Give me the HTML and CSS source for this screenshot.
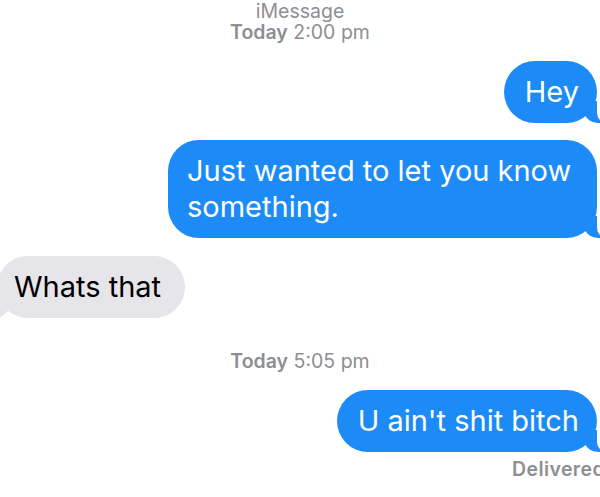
FILE: index.html
```html
<!DOCTYPE html>
<html lang="en">
<head>
  <meta charset="UTF-8">
  <meta name="viewport" content="width=device-width, initial-scale=1.0">
  <title>iMessage</title>
  <link rel="stylesheet" href="styles.css">
</head>
<body>
  <div id="thread">
    <div class="meta">
      <div>iMessage</div>
      <div><b>Today</b> 2:00 pm</div>
    </div>

    <div class="row row-sent first">
      <div class="bubble sent">Hey</div>
    </div>
    <div class="row row-sent">
      <div class="bubble sent wide">Just wanted to let you know something.</div>
    </div>
    <div class="row row-received">
      <div class="bubble received">Whats that</div>
    </div>

    <div class="meta meta-later">
      <div><b>Today</b> 5:05 pm</div>
    </div>

    <div class="row row-sent">
      <div class="bubble sent">U ain't shit bitch</div>
    </div>
    <div class="status">Delivered</div>
  </div>
</body>
</html>
```

FILE: styles.css
```css
body {
  margin: 0;
  overflow: hidden;
  background: white;
  font-family: Inter, "Helvetica Neue", Arial, sans-serif;
}
#thread {
  display: flex;
  flex-direction: column;
  width: 600px;
  padding-top: 1px;
}
.meta {
  color: #8e8e93;
  font-size: 19.5px;
  line-height: 21px;
  text-align: center;
}
.meta b {
  font-weight: 600;
}
.meta-later {
  margin-top: 33px;
}
.row {
  display: flex;
  margin-top: 17px;
}
.row.first {
  margin-top: 18px;
}
.row-sent {
  justify-content: flex-end;
  padding-right: 3px;
}
.row-received {
  justify-content: flex-start;
  margin-top: 18px;
  margin-left: -3px;
}
.meta-later + .row {
  margin-top: 18px;
}
.bubble {
  position: relative;
  font-size: 29px;
  line-height: 36px;
  padding: 13px 20px;
  border-radius: 31px;
  z-index: 1;
}
.sent {
  background: #1c8bf7;
  color: white;
  padding-left: 21px;
  padding-right: 18px;
}
.wide {
  max-width: 392px;
  padding-left: 19px;
}
.received {
  background: #e5e5ea;
  color: black;
  padding-left: 17px;
  padding-right: 24px;
}
.sent::before {
  content: "";
  position: absolute;
  z-index: -1;
  bottom: 0;
  right: -6px;
  width: 20px;
  height: 22px;
  background: #1c8bf7;
  border-bottom-left-radius: 15px;
}
.sent::after {
  content: "";
  position: absolute;
  z-index: -1;
  bottom: 0;
  right: -10px;
  width: 10px;
  height: 22px;
  background: white;
  border-bottom-left-radius: 10px;
}
.received::before {
  content: "";
  position: absolute;
  z-index: -1;
  bottom: 0;
  left: -7px;
  width: 20px;
  height: 22px;
  background: #e5e5ea;
  border-bottom-right-radius: 15px;
}
.received::after {
  content: "";
  position: absolute;
  z-index: -1;
  bottom: 0;
  left: -10px;
  width: 10px;
  height: 22px;
  background: white;
  border-bottom-right-radius: 10px;
}
.status {
  align-self: flex-start;
  margin-left: 512px;
  margin-top: 7px;
  color: #8e8e93;
  font-size: 19.5px;
  font-weight: 600;
  letter-spacing: 0.4px;
  line-height: 20px;
  white-space: nowrap;
}
```
